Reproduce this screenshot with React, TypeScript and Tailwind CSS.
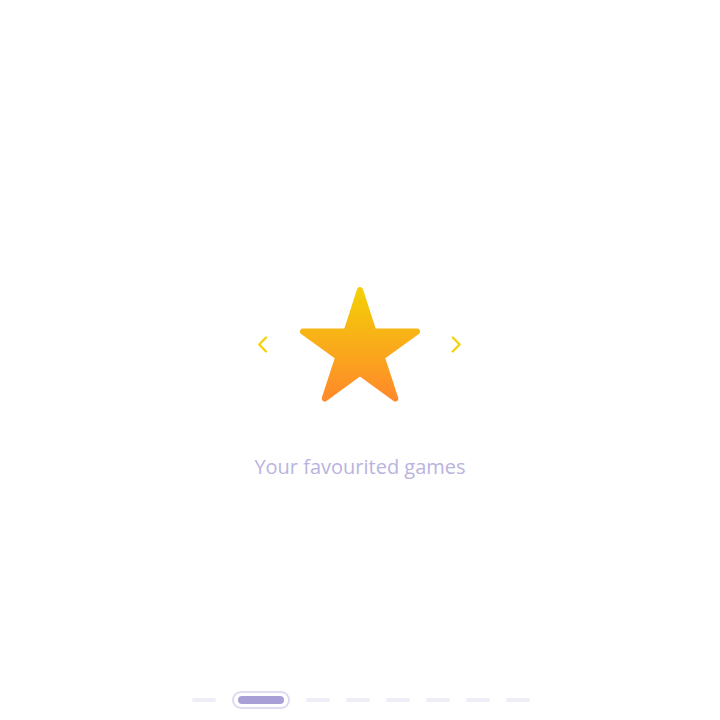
import React from 'react'

function Chevron({ dir }: { dir: 'left' | 'right' }) {
  const pts = dir === 'left' ? '9,2.5 2.2,9.5 9,16.5' : '1.8,2.5 8.6,9.5 1.8,16.5'
  return (
    <svg width="12" height="20" viewBox="0 0 12 20" fill="none">
      <polyline points={pts} stroke="#f5d20a" strokeWidth="2.4" strokeLinecap="round" strokeLinejoin="round" />
    </svg>
  )
}

function Star() {
  // regular five point star, outer radius 60, rounded by stroke
  const cx = 65
  const cy = 70
  const R = 60
  const r = R * 0.382
  const pts: string[] = []
  for (let i = 0; i < 10; i++) {
    const rad = i % 2 === 0 ? R : r
    const a = (Math.PI / 5) * i - Math.PI / 2
    pts.push(`${(cx + rad * Math.cos(a)).toFixed(2)},${(cy + rad * Math.sin(a)).toFixed(2)}`)
  }
  return (
    <svg width="130" height="130" viewBox="0 0 130 130">
      <defs>
        <linearGradient id="starGrad" x1="0" y1="0" x2="0" y2="1">
          <stop offset="0%" stopColor="#f3cf07" />
          <stop offset="100%" stopColor="#ff8a2a" />
        </linearGradient>
      </defs>
      <polygon
        points={pts.join(' ')}
        fill="url(#starGrad)"
        stroke="url(#starGrad)"
        strokeWidth="6"
        strokeLinejoin="round"
      />
    </svg>
  )
}

export default function App() {
  const steps = [0, 1, 2, 3, 4, 5, 6, 7]
  const active = 1

  return (
    <div className="h-[720px] w-full bg-white flex flex-col items-center" style={{ fontFamily: '"Open Sans", sans-serif' }}>
      <div className="mt-[280px] flex items-center gap-[26px]">
        <Chevron dir="left" />
        <Star />
        <Chevron dir="right" />
      </div>

      <p className="mt-[43px] text-[20px] leading-[28px] text-[#b9b3de]">Your favourited games</p>

      <div className="mt-auto mb-[11px] ml-[2px] flex items-center gap-4">
        {steps.map((s) =>
          s === active ? (
            <div key={s} className="w-[58px] h-[18px] rounded-full border-2 border-[#dedaf1] px-1 py-[3px]">
              <div className="h-full w-full rounded-full bg-[#a89fd6]" />
            </div>
          ) : (
            <div key={s} className="w-6 h-1 rounded-full bg-[#efeef6]" />
          )
        )}
      </div>
    </div>
  )
}
